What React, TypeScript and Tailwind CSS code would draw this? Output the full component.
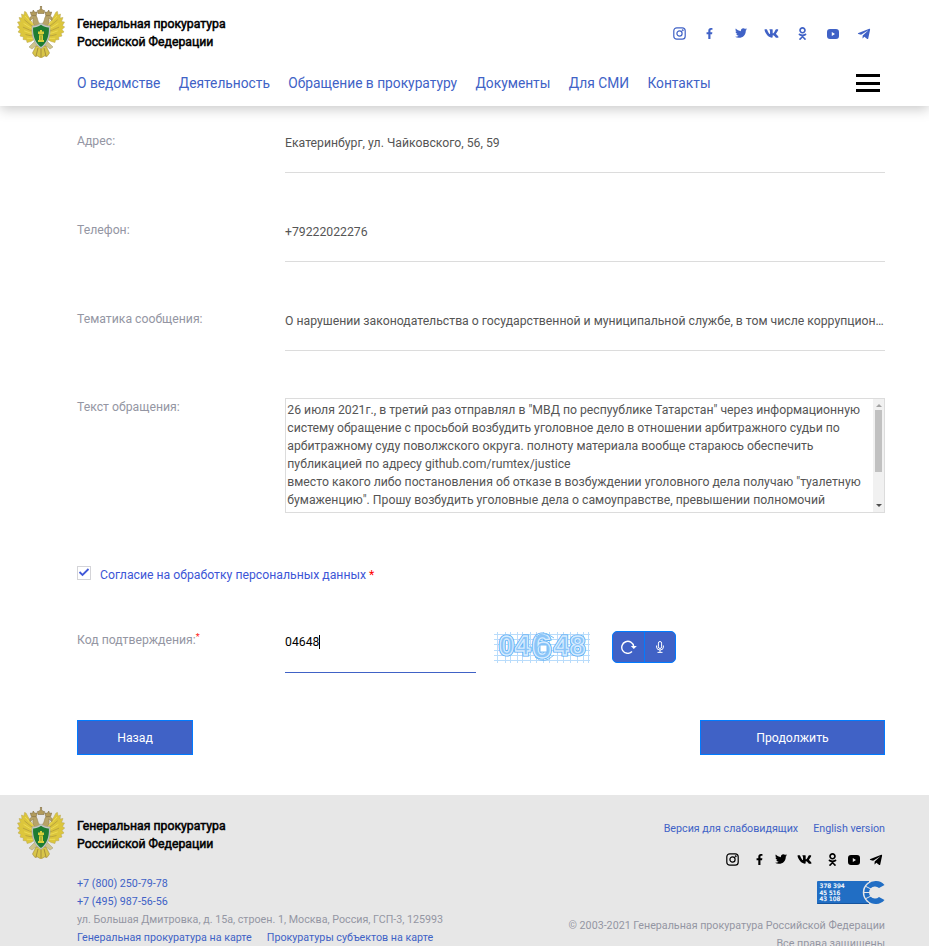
import type { ReactNode } from "react";
import { FaFacebookF, FaTwitter, FaVk, FaOdnoklassniki, FaTelegramPlane } from "react-icons/fa";

function Emblem() {
  const feathers = [0, 1, 2, 3, 4, 5, 6];
  const wing = (
    <g>
      <path
        d="M19 20 C14 17 12 11 9 6 L7.5 5.5 L7 9 L4.5 8 L5 12 L2 11.5 L3.5 15.5 L.5 16 L2.5 19.5 L.3 21 L3 23.5 L1 26 L4 27.5 L3 30 L6.5 31 L6 33.5 L9.5 34 L10 36.5 L14 35.5 L18 33Z"
        fill="#dcc63c"
        stroke="#b9a650"
        strokeWidth=".5"
      />
      {feathers.map((i) => (
        <path
          key={i}
          d={`M${8 - i * 0.7 + (i > 3 ? (i - 3) * 2 : 0)} ${10 + i * 3.7} Q${13} ${16 + i * 2.8} 18 ${20 + i * 2}`}
          fill="none"
          stroke={i % 2 ? "#b39d3c" : "#f3e15a"}
          strokeWidth=".8"
        />
      ))}
    </g>
  );
  const head = (
    <g>
      <path d="M21 23 C16 19 15 15 16.5 12 L13 14.5 L12.8 11.5 L15.5 9.5 L19 9.5 C21 12 20 15 23 18Z" fill="#b8a468" stroke="#8b7440" strokeWidth=".5" />
      <path d="M14.3 9.5 L13.3 6 L15.5 6.3 L16.2 4 L17.8 6.3 L20 6 L19.2 9.8Z" fill="#b29b5b" stroke="#776237" strokeWidth=".5" />
    </g>
  );
  return (
    <svg width="48" height="52" viewBox="0 0 48 52" className="block shrink-0">
      {wing}
      <g transform="matrix(-1 0 0 1 48 0)">{wing}</g>
      <path d="M18 35 L12 41 L15 43 L20 39 L24 45 L28 39 L33 43 L36 41 L30 35Z" fill="#cfc389" stroke="#aaa27e" strokeWidth=".6" />
      <path d="M19 40 L15.5 47 L18 50.5 L20.5 50 L24 52 L27.5 50 L30 50.5 L32.5 47 L29 40Z" fill="#d8c548" stroke="#a38936" strokeWidth=".6" />
      <path d="M21 42 L19 50 M24 42 V51 M27 42 L29 50" stroke="#9a823b" strokeWidth=".8" />
      {head}
      <g transform="matrix(-1 0 0 1 48 0)">{head}</g>
      <path d="M21 7.5 L20.4 4.6 L22.3 4.2 L23.4 2.6 V0 H24.6 V2.6 L25.7 4.2 L27.6 4.6 L27 7.5Z" fill="#b29b5b" stroke="#776237" strokeWidth=".5" />
      <path d="M24 17 C27 19.5 30.5 20 32.8 19.8 C34 30 31 38.3 24 42.5 C17 38.3 14 30 15.2 19.8 C17.5 20 21 19.5 24 17Z" fill="#c7c9c6" stroke="#a3a6a0" strokeWidth=".6" />
      <path d="M24 18.8 C26.8 21 29.8 21.5 31.9 21.4 C32.4 30 29.6 37 24 41 C18.4 37 15.6 30 16.1 21.4 C18.2 21.5 21.2 21 24 18.8Z" fill="#1e7c32" />
      <path d="M23 24 H25 V25.5 H27 V28 H26 V34 H27 V36 H21 V34 H22 V28 H21 V25.5 H23Z" fill="#d9cf3c" />
      <path d="M21.8 28.8 H26.2 M24 30 V34" stroke="#6a8c24" strokeWidth=".8" />
    </svg>
  );
}

function Brand({ footer = false }: { footer?: boolean }) {
  return (
    <div className="flex h-[52px] gap-3 pl-[17px]">
      <Emblem />
      <div className={footer ? "pt-[10px]" : "pt-[9px]"}>
        <div className="text-[12.25px] leading-[18px] text-black [-webkit-text-stroke:0.5px_black]">
          Генеральная прокуратура
          <br />
          Российской Федерации
        </div>
      </div>
    </div>
  );
}

function Instagram() {
  return (
    <svg width="13" height="13" viewBox="0 0 13 13" fill="none" stroke="currentColor" strokeWidth="1.2">
      <rect x=".8" y=".8" width="11.4" height="11.4" rx="3" />
      <circle cx="6.5" cy="6.5" r="2.6" />
      <circle cx="9.7" cy="3.3" r=".4" />
    </svg>
  );
}

function Youtube() {
  return (
    <svg width="12" height="10" viewBox="0 0 12 10">
      <path fill="currentColor" fillRule="evenodd" d="M3 0 H9 Q12 0 12 3 V7 Q12 10 9 10 H3 Q0 10 0 7 V3 Q0 0 3 0Z M4.8 3 V7 L8 5Z" />
    </svg>
  );
}

function Social({ footer = false }: { footer?: boolean }) {
  const icons: { node: ReactNode; top: string; bottom: string }[] = [
    { node: <Instagram />, top: "w-[30px]", bottom: "w-[27px]" },
    { node: <FaFacebookF size={11} />, top: "w-[31px]", bottom: "w-[21px]" },
    { node: <FaTwitter size={12} className="mb-px" />, top: "w-[31px]", bottom: "w-[24px]" },
    { node: <FaVk size={15} className="mb-px" />, top: "w-[31px]", bottom: "w-[28px]" },
    { node: <FaOdnoklassniki size={13} />, top: "w-[30px]", bottom: "w-[21px]" },
    { node: <Youtube />, top: "w-[31px]", bottom: "w-[22px]" },
    { node: <FaTelegramPlane size={14} />, top: "w-[13px]", bottom: "w-[13px]" },
  ];
  return (
    <div className={footer ? "flex h-[13px] items-center text-black" : "flex h-[13px] items-center text-[#4062c6]"}>
      {icons.map((icon, i) => (
        <span key={i} className={footer ? icon.bottom : icon.top}>
          <span className="flex h-[13px] w-[13px] items-center justify-center [&>svg]:shrink-0">{icon.node}</span>
        </span>
      ))}
    </div>
  );
}

const nav = ["О ведомстве", "Деятельность", "Обращение в прокуратуру", "Документы", "Для СМИ", "Контакты"];

const fields = [
  ["Адрес:", "Екатеринбург, ул. Чайковского, 56, 59"],
  ["Телефон:", "+79222022276"],
  ["Тематика сообщения:", "О нарушении законодательства о государственной и муниципальной службе, в том числе коррупцион…"],
];

const message = [
  "26 июля 2021г., в третий раз отправлял в \"МВД по респуублике Татарстан\" через информационную",
  "систему обращение с просьбой возбудить уголовное дело в отношении арбитражного судьи по",
  "арбитражному суду поволжского округа. полноту материала вообще стараюсь обеспечить",
  "публикацией по адресу github.com/rumtex/justice",
  "вместо какого либо постановления об отказе в возбуждении уголовного дела получаю \"туалетную",
  "бумаженцию\". Прошу возбудить уголовные дела о самоуправстве, превышении полномочий",
];

function Captcha() {
  const vertical = [3, 11, 16, 23, 28, 36, 42, 49, 55, 63, 69, 76, 83, 89, 94];
  const horizontal = [3, 8, 13, 19, 24, 29];
  const digits: [string, number, number, number][] = [
    ["0", 5, 24, 27],
    ["4", 21, 24, 27],
    ["6", 38, 27, 35],
    ["4", 60, 24, 27],
    ["8", 76, 24, 27],
  ];
  return (
    <svg width="96" height="32" viewBox="0 0 96 32" className="block">
      <g stroke="#b9dcfb" strokeWidth="1">
        {vertical.map((x) => (
          <path key={x} d={`M${x + 0.5} 1 V32`} />
        ))}
        {horizontal.map((y) => (
          <path key={y} d={`M0 ${y + 0.5} H96`} />
        ))}
      </g>
      {digits.map(([d, x, y, size], i) => (
        <g key={i} fontFamily="Liberation Sans, sans-serif" fontWeight="bold" fontSize={size}>
          <text x={x} y={y} fill="#d8ecff" stroke="#58acf5" strokeWidth="3">{d}</text>
          <text x={x} y={y} fill="#8cc5f8" stroke="#d8ecff" strokeWidth="1.3">{d}</text>
        </g>
      ))}
      <path d="M42 6 Q50 -1 60 7 M41 26 Q50 34 60 24" fill="none" stroke="#7bbdf6" />
      <rect x="46" y="14" width="7" height="7" fill="#fff" stroke="#7bbdf6" />
    </svg>
  );
}

export default function App() {
  return (
    <div className="h-[946px] w-[929px] overflow-hidden bg-white font-[Roboto,sans-serif] text-[12.24px] leading-[18px] text-[#555555]">
      <header className="relative h-[106px] bg-white pt-[6px] shadow-[0_3px_12px_rgba(0,0,0,0.22)]">
        <div className="flex justify-between pr-[59px]">
          <Brand />
          <div className="pt-[21px]">
            <Social />
          </div>
        </div>
        <div className="flex items-center justify-between pt-[14px] pr-[49px] pl-[77px]">
          <nav className="flex gap-[18.4px] text-[13.78px] leading-[22px] text-[#4062c6]">
            {nav.map((item) => (
              <a key={item}>{item}</a>
            ))}
          </nav>
          <div className="flex w-6 flex-col">
            <div className="h-[3px] bg-black" />
            <div className="mt-[5px] h-[3px] bg-black" />
            <div className="mt-1 mb-px h-[3px] bg-black" />
          </div>
        </div>
      </header>

      <main className="h-[689px] pt-2 pr-[44px] pl-[77px]">
        {fields.map(([label, value]) => (
          <div key={label} className="flex h-[89px]">
            <div className="w-[208px] pt-[18px] text-[#9496a3]">{label}</div>
            <div className="h-[59px] w-[600px] border-b border-[#dcdcdc] pt-5 whitespace-nowrap">{value}</div>
          </div>
        ))}

        <div className="flex h-[185px] pt-[17px]">
          <div className="w-[208px] text-[#9496a3]">Текст обращения:</div>
          <div className="flex h-[115px] w-[600px] justify-between border border-[#dcdcdc]">
            <div className="overflow-hidden pt-[2px] pl-[1.3px] whitespace-nowrap">
              {message.map((line) => (
                <div key={line}>{line}</div>
              ))}
            </div>
            <div className="flex w-[11px] flex-col items-center justify-between bg-[#f1f1f1] pt-[5px] pb-[5px]">
              <div className="flex flex-col items-center gap-[3px]">
                <div className="border-x-[3px] border-b-[3px] border-x-transparent border-b-[#a3a3a3]" />
                <div className="h-[62px] w-[7px] bg-[#c1c1c1]" />
              </div>
              <div className="border-x-[3px] border-t-[3px] border-x-transparent border-t-[#505050]" />
            </div>
          </div>
        </div>

        <div className="flex h-[65px] gap-[9px]">
          <div className="flex h-[14px] w-[14px] items-center justify-center border border-[#d4d4d8]">
            <svg width="12" height="12" viewBox="0 0 12 12" fill="none" stroke="#4158d8" strokeWidth="1.8">
              <path d="M1.5 5 L4.5 8 L10.5 2" />
            </svg>
          </div>
          <div className="text-[#3d56d6]">
            Согласие на обработку персональных данных <span className="text-[#ff0000]">*</span>
          </div>
        </div>

        <div className="flex h-[89px]">
          <div className="flex w-[208px] text-[#9496a3]">
            Код подтверждения:<span className="-mt-[3px] text-[9.2px] text-[#ff2020]">*</span>
          </div>
          <div className="flex h-[42px] w-[191px] border-b border-[#4062c6] pt-[2px] text-black">
            <span className="w-[34px]">04648</span>
            <span className="mt-[2px] h-[14px] w-px bg-black" />
          </div>
          <div className="ml-[18px]">
            <Captcha />
          </div>
          <div className="ml-[22px] flex h-8 w-16 overflow-hidden rounded-[5px] border border-[#007bff] bg-[#4062c6] text-white">
            <div className="flex w-8 items-center justify-center border-r border-[#007bff]">
              <svg width="16" height="14" viewBox="0 0 16 14" fill="none" stroke="currentColor" strokeWidth="1.4">
                <path d="M11 11.6 A6 6 0 1 1 12.7 6.5" />
                <path d="M9.8 6 H15.8 L12.8 9Z" fill="currentColor" stroke="none" />
              </svg>
            </div>
            <div className="flex flex-1 items-center justify-center">
              <svg width="8" height="12" viewBox="0 0 8 12" fill="none" stroke="currentColor">
                <rect x="2.4" y=".5" width="3.2" height="7" rx="1.6" />
                <path d="M.6 4.5 V6 Q.6 9 4 9 Q7.4 9 7.4 6 V4.5 M4 9 V11 M1.5 11.4 H6.5" />
              </svg>
            </div>
          </div>
        </div>

        <div className="flex justify-between text-white">
          <button className="h-[35px] w-[116px] border border-[#007bff] bg-[#4062c6]">Назад</button>
          <button className="h-[35px] w-[185px] border border-[#007bff] bg-[#4062c6]">Продолжить</button>
        </div>
      </main>

      <footer className="flex h-[151px] justify-between bg-[#e7e7e7] pt-3 pr-[44px] text-[10.71px] text-[#9496a3]">
        <div>
          <Brand footer />
          <div className="pt-[16px] pl-[77px]">
            <div className="text-[#4062c6]">+7 (800) 250-79-78</div>
            <div className="text-[#4062c6]">+7 (495) 987-56-56</div>
            <div>ул. Большая Дмитровка, д. 15а, строен. 1, Москва, Россия, ГСП-3, 125993</div>
            <div className="flex gap-[15px] text-[#4062c6]">
              <a>Генеральная прокуратура на карте</a>
              <a>Прокуратуры субъектов на карте</a>
            </div>
          </div>
        </div>
        <div className="flex flex-col items-end pt-[13px]">
          <div className="flex gap-[15px] text-[#4062c6]">
            <a>Версия для слабовидящих</a>
            <a>English version</a>
          </div>
          <div className="pt-[15px] pr-[3px]">
            <Social footer />
          </div>
          <svg width="68" height="24" viewBox="0 0 68 24" className="mt-[15px] block shrink-0">
            <path d="M1 0 H52 V23 H1 Q0 23 0 22 V1 Q0 0 1 0Z" fill="#216ec4" />
            <path d="M0 22 Q0 23 1 23 H52 V22Z" fill="#15549e" />
            <circle cx="58" cy="11.5" r="12.2" fill="#e7e7e7" />
            <path d="M67.5 4 A11.5 11.5 0 1 0 67.5 19 L62 16 A6 6 0 1 1 62 7Z" fill="#216ec4" />
            <path d="M46.5 11.5 H53 M48 5 L54 8 M48 18 L54 15" stroke="#e7e7e7" strokeWidth="1" />
            <g fill="#fff" stroke="#fff" strokeWidth=".2" fontFamily="DejaVu Sans, sans-serif" fontSize="6">
              <text x="2.6" y="7" textLength="25" lengthAdjust="spacingAndGlyphs">378 394</text>
              <text x="2.6" y="13.6" textLength="20.6" lengthAdjust="spacingAndGlyphs">45 516</text>
              <text x="2.6" y="20.2" textLength="20.6" lengthAdjust="spacingAndGlyphs">43 108</text>
            </g>
          </svg>
          <div className="pt-[12px]">© 2003-2021 Генеральная прокуратура Российской Федерации</div>
          <div>Все права защищены</div>
        </div>
      </footer>
    </div>
  );
}
